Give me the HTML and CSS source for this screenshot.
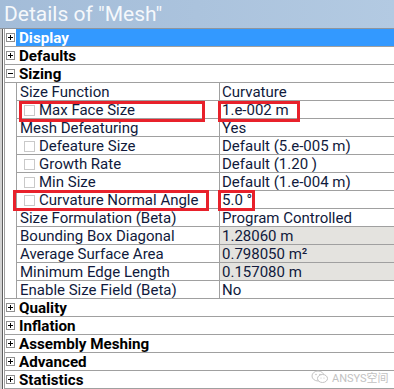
FILE: index.html
```html
<!DOCTYPE html>
<html lang="en">
<head>
    <meta charset="UTF-8">
    <title>Details of "Mesh"</title>
    <link rel="stylesheet" href="styles.css">
</head>
<body>

    <div class="window">
        <div class="titlebar">Details of "Mesh"</div>

        <div class="panel">
            <div class="edge"></div>
            <div class="grid">
                <div class="row section selected"><span class="gutter"><i class="toggle plus"></i></span><span class="label">Display</span></div>
                <div class="row section"><span class="gutter"><i class="toggle plus"></i></span><span class="label">Defaults</span></div>
                <div class="row section"><span class="gutter"><i class="toggle minus"></i></span><span class="label">Sizing</span></div>

                <div class="row prop"><span class="gutter"></span><span class="name">Size Function</span><span class="value">Curvature</span></div>
                <div class="row prop"><span class="gutter"></span><span class="name"><i class="check"></i>Max Face Size</span><span class="value">1.e-002 m</span></div>
                <div class="row prop"><span class="gutter"></span><span class="name">Mesh Defeaturing</span><span class="value">Yes</span></div>
                <div class="row prop"><span class="gutter"></span><span class="name"><i class="check"></i>Defeature Size</span><span class="value">Default (5.e-005 m)</span></div>
                <div class="row prop"><span class="gutter"></span><span class="name"><i class="check"></i>Growth Rate</span><span class="value">Default (1.20 )</span></div>
                <div class="row prop"><span class="gutter"></span><span class="name"><i class="check"></i>Min Size</span><span class="value">Default (1.e-004 m)</span></div>
                <div class="row prop"><span class="gutter"></span><span class="name"><i class="check"></i>Curvature Normal Angle</span><span class="value">5.0 °</span></div>
                <div class="row prop"><span class="gutter"></span><span class="name">Size Formulation (Beta)</span><span class="value">Program Controlled</span></div>
                <div class="row prop"><span class="gutter"></span><span class="name">Bounding Box Diagonal</span><span class="value readonly">1.28060 m</span></div>
                <div class="row prop"><span class="gutter"></span><span class="name">Average Surface Area</span><span class="value readonly">0.798050 m²</span></div>
                <div class="row prop"><span class="gutter"></span><span class="name">Minimum Edge Length</span><span class="value readonly">0.157080 m</span></div>
                <div class="row prop last"><span class="gutter"></span><span class="name">Enable Size Field (Beta)</span><span class="value">No</span></div>

                <div class="row section"><span class="gutter"><i class="toggle plus"></i></span><span class="label">Quality</span></div>
                <div class="row section"><span class="gutter"><i class="toggle plus"></i></span><span class="label">Inflation</span></div>
                <div class="row section"><span class="gutter"><i class="toggle plus"></i></span><span class="label">Assembly Meshing</span></div>
                <div class="row section"><span class="gutter"><i class="toggle plus"></i></span><span class="label">Advanced</span></div>
                <div class="row section"><span class="gutter"><i class="toggle plus"></i></span><span class="label">Statistics</span></div>
            </div>
        </div>

        <!-- red markup boxes drawn over the grid -->
        <div class="mark mark-face-name"></div>
        <div class="mark mark-face-value"></div>
        <div class="mark mark-angle-name"></div>
        <div class="mark mark-angle-value"></div>

        <div class="watermark">
            <svg width="18" height="14" viewBox="0 0 18 14">
                <ellipse cx="7" cy="6" rx="6" ry="5" fill="none" stroke="#c4c4c4" stroke-width="1"/>
                <ellipse cx="11.5" cy="8.5" rx="5" ry="4" fill="#fff" stroke="#c4c4c4" stroke-width="1"/>
                <circle cx="5" cy="4.5" r="0.8" fill="#c4c4c4"/>
                <circle cx="9" cy="4.5" r="0.8" fill="#c4c4c4"/>
                <circle cx="10" cy="8" r="0.6" fill="#c4c4c4"/>
                <circle cx="13" cy="8" r="0.6" fill="#c4c4c4"/>
            </svg>
            <span>ANSYS空间</span>
        </div>
    </div>

</body>
</html>
```

FILE: styles.css
```css
* {
    margin: 0;
    padding: 0;
    box-sizing: border-box;
}

body {
    font-family: Roboto, 'Noto Sans CJK SC', sans-serif;
    background-color: #fff;
    color: #101a3c;
    width: 394px;
    height: 389px;
    overflow: hidden;
}

.window {
    position: relative;
    width: 394px;
    height: 389px;
    overflow: hidden;
}

.titlebar {
    height: 29px;
    padding-left: 4px;
    line-height: 29px;
    font-size: 21px;
    color: #f5f8fb;
    background: linear-gradient(to right, #a3bcd8, #b3cae2);
    border-bottom: 1px solid #8e959d;
}

.panel {
    display: flex;
}

/* sliver of the neighbouring window on the left */
.edge {
    width: 4px;
    background: linear-gradient(to right, #d2d2d2 0 2px, #5d5d5d 2px 3px, #fff 3px);
}

.grid {
    flex: 1;
    border-left: 1px solid #a0a0a0;
}

.row {
    display: grid;
    grid-template-columns: 11px 203px 1fr;
    height: 18px;
    font-size: 15px;
    line-height: 17px;
    white-space: nowrap;
}

.gutter {
    display: flex;
    align-items: center;
    justify-content: center;
    height: 18px;
}

.section {
    border-bottom: 1px solid #a0a0a0;
}

.section .gutter {
    height: 17px;
}

.section .label {
    grid-column: 2 / 4;
    padding-left: 3px;
    padding-top: 1px;
    font-size: 15.2px;
    line-height: 16px;
    font-weight: bold;
    color: #000;
}

.selected .label {
    background-color: #3399ff;
    color: #fff;
}

.toggle {
    position: relative;
    display: block;
    width: 9px;
    height: 9px;
    border: 1px solid #8f8f8f;
    background: #fff;
}

.toggle::before {
    content: "";
    position: absolute;
    left: 1px;
    top: 3px;
    width: 5px;
    height: 1px;
    background: #000;
}

.toggle.plus::after {
    content: "";
    position: absolute;
    left: 3px;
    top: 1px;
    width: 1px;
    height: 5px;
    background: #000;
}

.name,
.value {
    border-bottom: 1px solid #a0a0a0;
    border-left: 1px solid #a0a0a0;
    padding-left: 3px;
    padding-top: 1px;
    display: flex;
    align-items: center;
    overflow: hidden;
}

.value {
    padding-left: 2px;
}

.readonly {
    background-color: #e4e3df;
}

.last .gutter {
    border-bottom: 1px solid #a0a0a0;
}

.check {
    display: inline-block;
    width: 11px;
    height: 11px;
    margin: 0 4px 0 4px;
    border: 1px solid #c9c9c9;
    background: #fff;
}

/* hand-drawn red boxes */
.mark {
    position: absolute;
    border: 3px solid #e8212b;
}

.mark-face-name {
    left: 19px;
    top: 101px;
    width: 186px;
    height: 21px;
}

.mark-face-value {
    left: 218px;
    top: 101px;
    width: 82px;
    height: 21px;
}

.mark-angle-name {
    left: 13px;
    top: 190px;
    width: 196px;
    height: 21px;
}

.mark-angle-value {
    left: 218px;
    top: 190px;
    width: 37px;
    height: 21px;
}

.watermark {
    position: absolute;
    left: 311px;
    top: 369px;
    display: flex;
    align-items: center;
    gap: 3px;
    font-size: 11px;
    color: #c2c2c2;
}
```
